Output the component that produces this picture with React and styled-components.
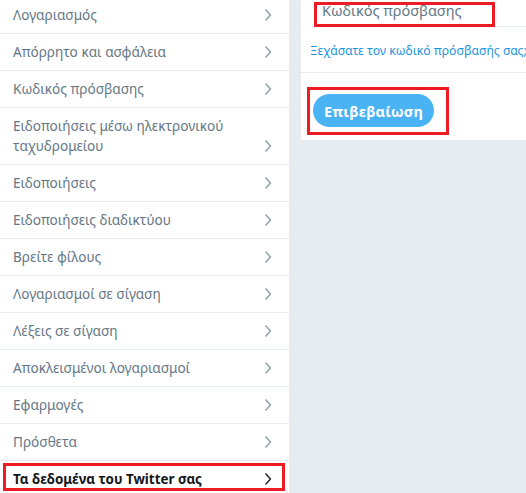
import React from "react";
import styled, { createGlobalStyle, css } from "styled-components";

const GlobalStyle = createGlobalStyle`
  html, body {
    margin: 0;
    padding: 0;
    background: #e6ecf0;
    font-family: "Noto Sans", "Open Sans", sans-serif;
    overflow: hidden;
  }
`;

const Page = styled.div`
  display: flex;
  align-items: flex-start;
  gap: 12px;
  width: 526px;
  height: 493px;
  overflow: hidden;
`;

const Menu = styled.ul`
  flex: none;
  width: 289px;
  margin: -3px 0 0;
  padding: 0;
  list-style: none;
  background: #fff;
`;

const MenuItem = styled.li`
  position: relative;
  display: flex;
  align-items: flex-end;
  justify-content: space-between;
  padding: 8px 17px 8px 13px;
  border-bottom: 1px solid #e6ecf0;
  font-size: 13.6px;
  line-height: 20px;
  color: #657786;

  ${(props) =>
    props.active &&
    css`
      color: #14171a;
      font-weight: 700;
      font-size: 13.4px;
    `}
`;

const ItemLabel = styled.span`
  max-width: 230px;
`;

const Chevron = styled.svg`
  flex: none;
  width: 8px;
  height: 20px;
`;

const Marker = styled.span`
  position: absolute;
  border: 3px solid #ed1c24;
  pointer-events: none;
`;

const Panel = styled.section`
  flex: 1;
  min-width: 0;
  overflow: hidden;
  background: #fff;
  height: 140px;
`;

const InputRow = styled.div`
  position: relative;
  height: 26px;
  margin-left: 13px;
  border-bottom: 1px solid #e6ecf0;
  padding-left: 8px;
  font-size: 14.5px;
  line-height: 20px;
  color: #657786;
`;

const LinkRow = styled.div`
  padding: 11px 0 0 9px;
  height: 34px;
  border-bottom: 1px solid #e6ecf0;
`;

const ForgotLink = styled.a`
  font-size: 12.2px;
  color: #1b95e0;
  text-decoration: none;
  white-space: nowrap;
`;

const Actions = styled.div`
  padding: 21px 12px 0;
`;

const ButtonWrap = styled.div`
  position: relative;
  display: inline-block;
`;

const PrimaryButton = styled.button`
  height: 33px;
  width: 121px;
  border: none;
  border-radius: 100px;
  background: #4ab3f4;
  color: #fff;
  font-family: inherit;
  font-size: 14.5px;
  font-weight: 700;
  letter-spacing: 0.2px;
  cursor: pointer;
`;

const items = [
  "Λογαριασμός",
  "Απόρρητο και ασφάλεια",
  "Κωδικός πρόσβασης",
  "Ειδοποιήσεις μέσω ηλεκτρονικού ταχυδρομείου",
  "Ειδοποιήσεις",
  "Ειδοποιήσεις διαδικτύου",
  "Βρείτε φίλους",
  "Λογαριασμοί σε σίγαση",
  "Λέξεις σε σίγαση",
  "Αποκλεισμένοι λογαριασμοί",
  "Εφαρμογές",
  "Πρόσθετα",
];

const ChevronIcon = ({ color }) => (
  <Chevron viewBox="0 0 8 20">
    <polyline
      points="1.5,4.5 6.5,10 1.5,15.5"
      fill="none"
      stroke={color}
      strokeWidth="1.3"
    />
  </Chevron>
);

export default function App() {
  return (
    <>
      <GlobalStyle />
      <Page>
        <Menu>
          {items.map((label) => (
            <MenuItem key={label}>
              <ItemLabel>{label}</ItemLabel>
              <ChevronIcon color="#8899a6" />
            </MenuItem>
          ))}
          <MenuItem active>
            <ItemLabel>Τα δεδομένα του Twitter σας</ItemLabel>
            <ChevronIcon color="#14171a" />
            <Marker style={{ top: 2, left: 3, width: 276, height: 22 }} />
          </MenuItem>
        </Menu>

        <Panel>
          <InputRow>
            Κωδικός πρόσβασης
            <Marker style={{ top: 2, left: 0, width: 175, height: 19 }} />
          </InputRow>
          <LinkRow>
            <ForgotLink href="#">Ξεχάσατε τον κωδικό πρόσβασής σας;</ForgotLink>
          </LinkRow>
          <Actions>
            <ButtonWrap>
              <PrimaryButton>Επιβεβαίωση</PrimaryButton>
              <Marker style={{ top: -7, left: -6, width: 136, height: 42 }} />
            </ButtonWrap>
          </Actions>
        </Panel>
      </Page>
    </>
  );
}
